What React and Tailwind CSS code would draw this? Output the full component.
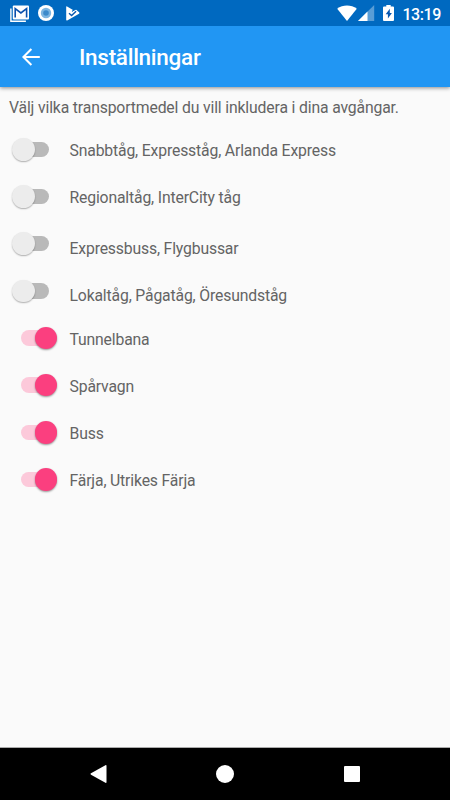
import { useState } from 'react';
import clsx from 'clsx';

const TRANSPORTS = [
  { id: 'express-train', label: 'Snabbtåg, Expresståg, Arlanda Express', enabled: false, labelClass: 'pt-[3px]' },
  { id: 'regional-train', label: 'Regionaltåg, InterCity tåg', enabled: false, labelClass: 'pt-[2px]' },
  { id: 'express-bus', label: 'Expressbuss, Flygbussar', enabled: false, labelClass: 'pt-[10px]' },
  { id: 'local-train', label: 'Lokaltåg, Pågatåg, Öresundståg', enabled: false, labelClass: 'pt-[10px]' },
  { id: 'metro', label: 'Tunnelbana', enabled: true, labelClass: 'pt-[3px]' },
  { id: 'tram', label: 'Spårvagn', enabled: true, labelClass: 'pt-[3px]' },
  { id: 'bus', label: 'Buss', enabled: true, labelClass: 'pt-[2px]' },
  { id: 'ferry', label: 'Färja, Utrikes Färja', enabled: true, labelClass: 'pt-[2px]' },
];

function StatusBar() {
  return (
    <div className="relative z-10 flex h-[26px] shrink-0 items-center bg-[#0069c0] text-white">
      {/* mail */}
      <svg className="ml-[10px] h-[17px] w-[20px]" viewBox="0 0 20 17" fill="none" stroke="currentColor">
        <path d="M.9 3.5v12.8h15" strokeWidth="1.4" />
        <rect x="2.8" y=".5" width="16.2" height="14" rx="1" fill="currentColor" stroke="none" />
        <path d="M5.2 12.6V3.6l5.7 4.4L16.6 3.6v9" stroke="#0b50ac" strokeWidth="1.6" />
      </svg>
      {/* sync */}
      <svg className="ml-[8px] h-[16px] w-[16px]" viewBox="0 0 16 16">
        <circle cx="8" cy="8" r="8" fill="#fff" />
        <circle cx="8" cy="8" r="5.2" fill="#7db5e1" />
        <circle cx="8" cy="8" r="2.8" fill="#3c8acb" />
      </svg>
      {/* play store */}
      <svg className="ml-[12px] h-[15px] w-[14px]" viewBox="0 0 14 15">
        <path d="M.2 1Q.2 0 1.1.5L7 4.1 5.6 5.8 9.9 3.5 13.3 6.4Q13.7 7.2 13 7.7L1.2 14.5Q.2 14.9.2 13.8Z" fill="#fff" />
        <path d="M6 5.4 10.6 2.6" fill="none" stroke="#0069c0" strokeWidth="1" />
        <path d="m3 7.2 2.6 2.3 4.5-4.3" fill="none" stroke="#0757b0" strokeWidth="1.4" />
      </svg>

      <div className="ml-auto flex items-center">
        <svg className="h-[16px] w-[20px]" viewBox="0 0 20 16" fill="currentColor">
          <path d="M10 16 0.2 3.7C5.8-.7 14.2-.7 19.8 3.7Z" />
        </svg>
        <svg className="ml-[1px] h-[16px] w-[17px]" viewBox="0 0 17 16" fill="currentColor">
          <path d="M16.2 0v16H0Z" opacity=".35" />
          <path d="M9.5 6.6V16H0Z" />
        </svg>
        <svg className="ml-[8px] h-[16px] w-[11px]" viewBox="0 0 11 16">
          <path d="M3.3 0h4.4v1.5H10q1 0 1 1V15q0 1-1 1H1q-1 0-1-1V2.5q0-1 1-1h2.3Z" fill="#fff" />
          <path d="M6.8 3.8 2.7 9.2h2.2v4.2l4-5.5H6.8Z" fill="#0757b0" />
        </svg>
        <span className="mr-[9px] ml-[8px] pt-[3px] text-[16px] leading-none font-medium tracking-[-0.4px]">13:19</span>
      </div>
    </div>
  );
}

function AppBar() {
  return (
    <header className="relative flex h-[61px] shrink-0 items-center bg-[#2196f3] text-white shadow-[0_1px_4px_rgba(0,0,0,0.45)]">
      <button type="button" aria-label="Tillbaka" className="ml-[22px]">
        <svg className="h-[18px] w-[18px]" viewBox="0 0 18 18" fill="none" stroke="currentColor" strokeWidth="2">
          <path d="M17.8 9H1.5M9.4 1 1.4 9l8 8" />
        </svg>
      </button>
      <h1 className="ml-[39px] pt-[2px] text-[22.5px] leading-none font-medium tracking-[-0.28px]">Inställningar</h1>
    </header>
  );
}

function Switch({ checked, onChange, label }) {
  return (
    <button
      type="button"
      role="switch"
      aria-checked={checked}
      aria-label={label}
      onClick={onChange}
      className={clsx('relative flex h-[23px] w-[37px] items-center', checked ? 'ml-[20.5px]' : 'ml-[12px]')}
    >
      <span
        className={clsx(
          'h-[15.5px] w-[31px] rounded-full',
          checked ? 'bg-[#fcc9da]' : 'ml-[6px] bg-[#b9b9b9]'
        )}
      />
      <span
        className={clsx(
          'absolute h-[22.5px] w-[22.5px] rounded-full',
          checked
            ? 'left-[14px] bg-[#fb3f7f] shadow-[0_1px_2px_rgba(0,0,0,0.4)]'
            : 'left-0 bg-[#ececec] shadow-[0_1px_1.5px_rgba(0,0,0,0.3)]'
        )}
      />
    </button>
  );
}

function NavigationBar() {
  return (
    <nav className="flex h-[53px] shrink-0 items-center border-t border-[#aaa] bg-black text-white">
      <svg className="ml-[90px] h-[18px] w-[17px]" viewBox="0 0 17 18" fill="currentColor">
        <path d="M1 8.3 15.4.2q1.1-.5 1.1.7v16.2q0 1.2-1.1.7L1 9.7q-1-.7 0-1.4Z" />
      </svg>
      <span className="ml-[109px] h-[18px] w-[18px] rounded-full bg-white" />
      <span className="ml-[109.5px] h-[16.5px] w-[16.5px] rounded-[1px] bg-white" />
    </nav>
  );
}

export default function App() {
  const [transports, setTransports] = useState(TRANSPORTS);

  const toggle = (id) => {
    setTransports((prev) => prev.map((t) => (t.id === id ? { ...t, enabled: !t.enabled } : t)));
  };

  return (
    <div className="flex h-[800px] w-[450px] flex-col overflow-hidden bg-[#fafafa] font-['Roboto',sans-serif]">
      <StatusBar />
      <AppBar />
      <main className="flex-1 text-[15.75px] tracking-[-0.16px] text-[#646464]">
        <p className="pt-[10px] pl-[9px] leading-[22px] tracking-[-0.15px] whitespace-nowrap">
          Välj vilka transportmedel du vill inkludera i dina avgångar.
        </p>
        <ul className="pt-[6.7px]">
          {transports.map((t) => (
            <li key={t.id} className="flex h-[47.2px] items-center">
              <div className="w-[69.5px]">
                <Switch checked={t.enabled} label={t.label} onChange={() => toggle(t.id)} />
              </div>
              <span className={clsx('whitespace-nowrap', t.labelClass)}>{t.label}</span>
            </li>
          ))}
        </ul>
      </main>
      <NavigationBar />
    </div>
  );
}
